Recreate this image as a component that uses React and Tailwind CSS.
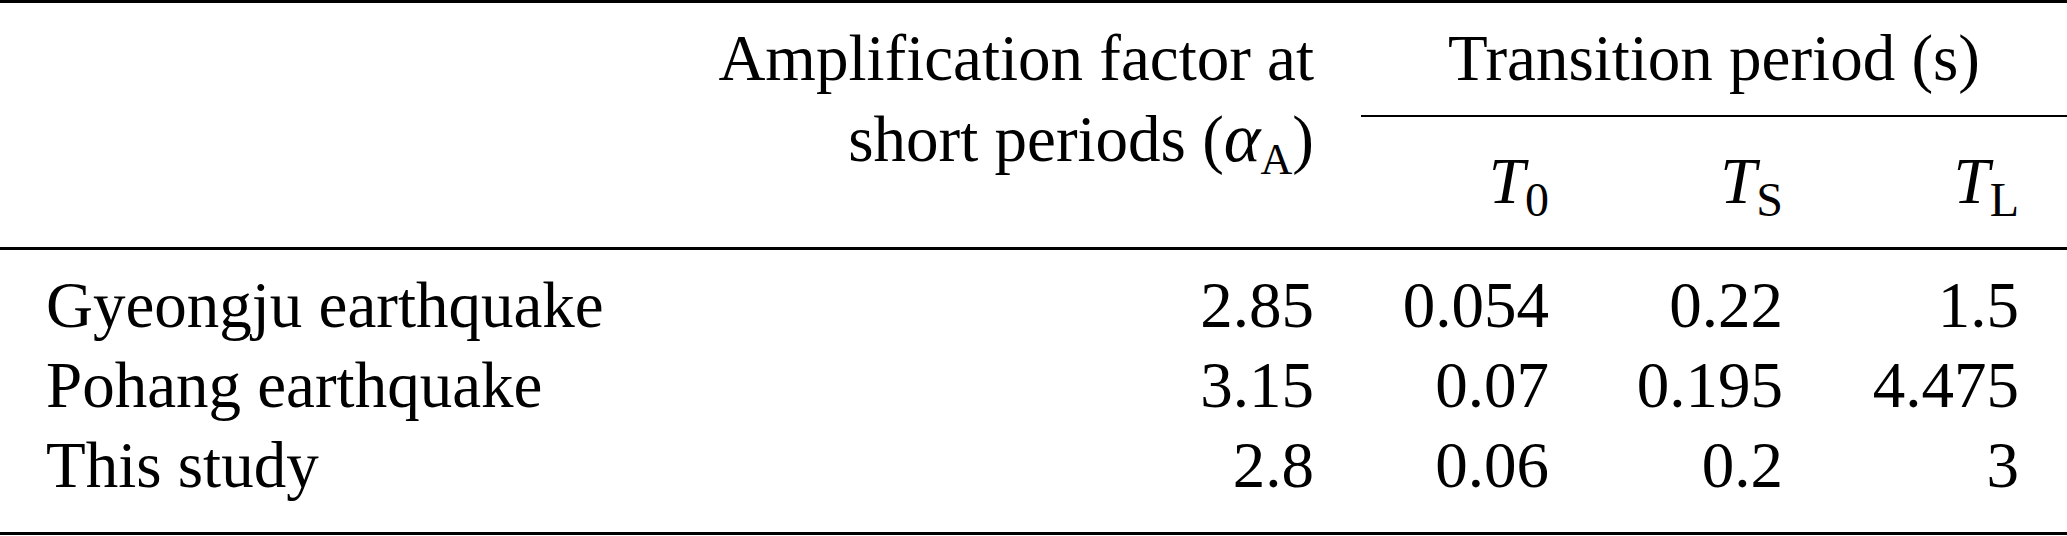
import React from 'react'

const ROWS = [
  { name: 'Gyeongju earthquake', alpha: '2.85', t0: '0.054', ts: '0.22', tl: '1.5' },
  { name: 'Pohang earthquake', alpha: '3.15', t0: '0.07', ts: '0.195', tl: '4.475' },
  { name: 'This study', alpha: '2.8', t0: '0.06', ts: '0.2', tl: '3' },
]

// subscript, lowered under the baseline without growing the line box
const Sub = ({ children }) => (
  <span className="text-[48px] leading-[0] align-[-13px] not-italic">{children}</span>
)

const App = () => {
  return (
    <div className="w-[2067px] h-[536px] bg-white text-black font-['Liberation_Serif','Times_New_Roman',serif] text-[65px] leading-[80px] overflow-hidden">
      <div className="h-[3px] bg-black" />

      {/* header */}
      <div className="flex h-[244px]">
        <div className="w-[674px]" />
        <div className="w-[640px] pt-[15px] text-right whitespace-nowrap">
          <div className="h-[80px]">Amplification factor at</div>
          <div className="h-[80px]">
            short periods (<i className="text-[70px]">α</i>
            <span className="text-[44px] leading-[0] align-[-13px]">A</span>)
          </div>
        </div>
        <div className="w-[753px] pt-[15px]">
          <div className="h-[80px] pl-[47px] text-center whitespace-nowrap">Transition period (s)</div>
          <div className="ml-[47px] mt-[17px] h-[2px] bg-black" />
          <div className="flex mt-[24px] h-[80px]">
            <div className="w-[235px] text-right"><i>T</i><Sub>0</Sub></div>
            <div className="w-[234px] text-right"><i>T</i><Sub>S</Sub></div>
            <div className="w-[236px] text-right"><i>T</i><Sub>L</Sub></div>
          </div>
        </div>
      </div>

      <div className="h-[3px] bg-black" />

      {/* body */}
      <div className="pt-[15px] pb-[27px]">
        {ROWS.map((r) => (
          <div key={r.name} className="flex h-[80px] whitespace-nowrap">
            <div className="w-[674px] pl-[46px]">{r.name}</div>
            <div className="w-[640px] text-right">{r.alpha}</div>
            <div className="w-[235px] text-right">{r.t0}</div>
            <div className="w-[234px] text-right">{r.ts}</div>
            <div className="w-[236px] text-right">{r.tl}</div>
          </div>
        ))}
      </div>

      <div className="h-[3px] bg-black" />
    </div>
  )
}

export default App
